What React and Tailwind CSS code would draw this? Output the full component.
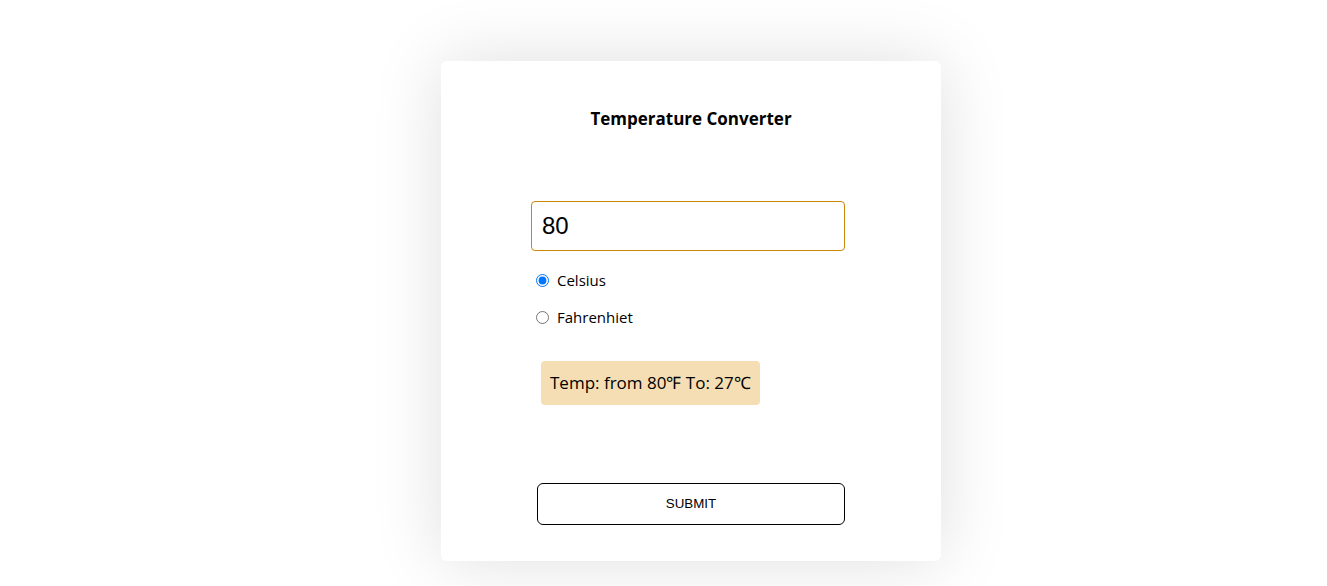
import { useState } from "react";

export default function App() {
  const [nilai, setNilai] = useState("80");
  const [satuan, setSatuan] = useState("celsius");

  return (
    <div className="min-h-[586px] bg-white flex justify-center pl-[55px] pt-[61px]" style={{ fontFamily: '"Open Sans", sans-serif' }}>
      <div className="w-[500px] h-[500px] bg-white rounded-[6px] shadow-[0_0_70px_rgba(0,0,0,0.13)] flex flex-col">
        <h1 className="mt-[48px] h-[20px] leading-[20px] text-center text-[17px] font-bold text-black">
          Temperature Converter
        </h1>

        <input
          type="text"
          value={nilai}
          onChange={(e) => setNilai(e.target.value)}
          className="ml-[90px] mt-[72px] w-[314px] h-[50px] border border-[#c8890a] rounded-[4px] px-[10px] text-[24px] text-black outline-none"
          style={{ fontFamily: '"Liberation Sans", Arial, sans-serif' }}
        />

        <div className="ml-[95px] mt-[19px] flex flex-col gap-[17px]">
          <label className="flex items-center h-[20px] text-[15px] text-black">
            <input
              type="radio"
              name="satuan"
              checked={satuan === "celsius"}
              onChange={() => setSatuan("celsius")}
              className="w-[13px] h-[13px] m-0 accent-[#0075ff]"
            />
            <span className="ml-[8px]">Celsius</span>
          </label>
          <label className="flex items-center h-[20px] text-[15px] text-black">
            <input
              type="radio"
              name="satuan"
              checked={satuan === "fahrenheit"}
              onChange={() => setSatuan("fahrenheit")}
              className="w-[13px] h-[13px] m-0"
            />
            <span className="ml-[8px]">Fahrenhiet</span>
          </label>
        </div>

        <div className="ml-[100px] mt-[34px] self-start h-[44px] bg-[#f5deb3] rounded-[4px] px-[9px] flex items-center text-[17px] text-black">
          Temp: from 80℉ To: 27℃
        </div>

        <button
          className="ml-[96px] mt-[78px] w-[308px] h-[42px] border border-black rounded-[6px] bg-white text-[13.333px] text-black"
          style={{ fontFamily: '"Liberation Sans", Arial, sans-serif' }}
        >
          SUBMIT
        </button>
      </div>
    </div>
  );
}
